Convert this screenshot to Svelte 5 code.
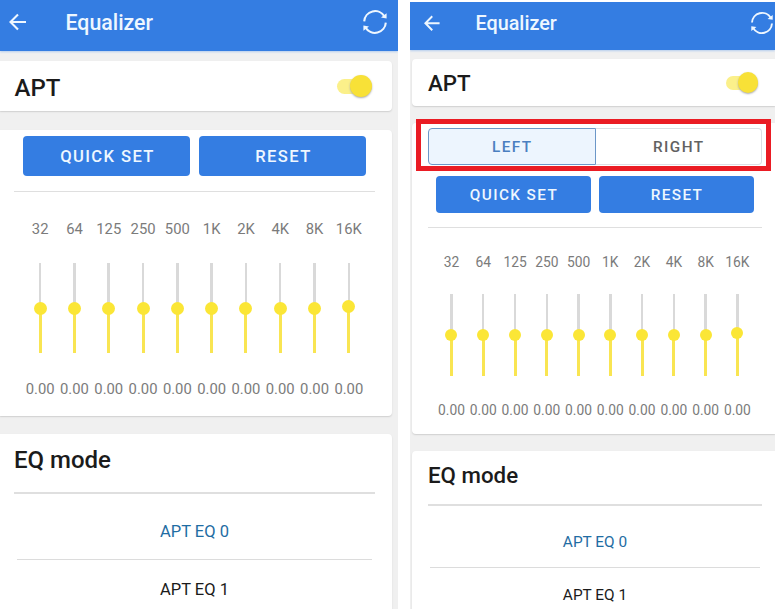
<script>
  const bands = ['32', '64', '125', '250', '500', '1K', '2K', '4K', '8K', '16K'].map((label, i) => ({
    label,
    level: i === 9 ? 52 : 50,
  }));
  const modes = ['APT EQ 0', 'APT EQ 1'];
  const screens = [
    { kind: 'single', channels: false },
    { kind: 'dual', channels: true },
  ];
</script>

<main>
  {#each screens as screen}
    <section class="screen {screen.kind}">
      <header>
        <svg class="back" viewBox="0 0 18 18">
          <path d="M17 9H1.8M9 1.4L1.5 9L9 16.6" />
        </svg>
        <h1>Equalizer</h1>
        <svg class="sync" viewBox="0 0 26 26">
          <path d="M2.2 12.4A10.9 10.9 0 0 1 22.4 7.4M23.8 13.6A10.9 10.9 0 0 1 3.6 18.6" />
          <path class="tip" d="M24.6 4.2V9.4L19 8.6ZM1.4 21.8V16.6L7 17.4Z" />
        </svg>
      </header>
      <div class="card power">
        <h2>APT</h2>
        <div class="switch"><i></i></div>
      </div>
      <div class="card eq">
        {#if screen.channels}
          <div class="channels">
            <button class="on">LEFT</button>
            <button>RIGHT</button>
          </div>
        {/if}
        <div class="actions">
          <button>QUICK SET</button>
          <button>RESET</button>
        </div>
        <hr />
        <div class="bands">
          {#each bands as band}
            <div class="band">
              <span>{band.label}</span>
              <div class="track">
                <div class="fill" style="height: {band.level}%"><i></i></div>
              </div>
              <span>0.00</span>
            </div>
          {/each}
        </div>
      </div>
      <div class="card modes">
        <h2>EQ mode</h2>
        <hr />
        {#each modes as mode, i}
          <div class="mode" class:active={i === 0}>{mode}</div>
        {/each}
      </div>
    </section>
  {/each}
  <div class="highlight"></div>
</main>

<style>
  main {
    position: relative;
    display: flex;
    gap: 12px;
    width: 775px;
    height: 609px;
    overflow: hidden;
    background: #fff;
    font-family: Roboto, 'Liberation Sans', sans-serif;
    color: #1b1b1b;
  }
  .screen {
    box-sizing: border-box;
    flex: none;
    display: flex;
    flex-direction: column;
    height: 609px;
    overflow: hidden;
    background: #f0f0f0;
  }
  .single {
    width: 398px;
    --title: 24px;
    --head: 21.3px;
    --btn: 16.6px;
    --small: 14.8px;
    --mode: 16.5px;
  }
  .dual {
    width: 365px;
    height: 607px;
    margin-top: 2px;
    --title: 22.3px;
    --head: 19.8px;
    --btn: 15.3px;
    --small: 13.8px;
    --mode: 15.4px;
  }
  h1, h2 { margin: 0; font-weight: 500; white-space: nowrap; }
  hr { margin: 0; border: 0; height: 1.5px; background: #dfdfdf; flex: none; }
  button { margin: 0; padding: 0; border: 0; font-family: inherit; font-weight: 500; }
  header {
    box-sizing: border-box;
    flex: none;
    display: flex;
    align-items: center;
    background: #347de2;
    color: #eef7ff;
    box-shadow: 0 1px 2px #b5cdee;
  }
  .single header { height: 51px; padding: 0 10px 7px 9px; }
  .dual header { height: 48px; padding: 0 1px 6px 14px; }
  h1 { flex: 1; font-size: var(--head); }
  svg { fill: none; stroke: #eef7ff; stroke-width: 2.1; flex: none; display: block; }
  .tip { fill: #eef7ff; stroke: none; }
  .single .back { width: 18px; margin-right: 38.5px; }
  .dual .back { width: 16.5px; margin-right: 35px; }
  .single .sync { width: 26px; }
  .dual .sync { width: 24px; }
  .card {
    box-sizing: border-box;
    flex: none;
    display: flex;
    flex-direction: column;
    background: #fff;
    box-shadow: 0 1px 1.5px #cfcfcf;
  }
  .single .card { width: 392px; border-radius: 0 4px 4px 0; }
  .dual .card { margin-left: 2px; width: 363px; border-radius: 4px 0 0 4px; }
  .power { flex-direction: row; align-items: center; justify-content: space-between; }
  .single .power { margin-top: 10px; height: 50px; padding: 3px 20px 0 14.5px; }
  .dual .power { margin-top: 9px; height: 47px; padding: 1px 17px 0 16px; }
  h2 { font-size: var(--title); }
  .switch { display: flex; align-items: center; justify-content: flex-end; background: #fbf08a; border-radius: 8px; }
  .switch i { background: #f8e137; border-radius: 50%; box-shadow: 0 1px 2px #aaa; }
  .single .switch { width: 35px; height: 15px; margin-top: -3px; }
  .single .switch i { width: 22px; height: 22px; }
  .dual .switch { width: 32px; height: 14px; margin-top: -1px; }
  .dual .switch i { width: 20.5px; height: 20.5px; }
  .single .eq { margin-top: 19px; height: 285.5px; padding: 6px 17px 0 14px; }
  .dual .eq { margin-top: 17px; height: 311px; padding: 5px 13px 0 16px; }
  .channels { display: flex; height: 36.5px; margin-bottom: 11.5px; }
  .channels button {
    flex: 1;
    padding: 2px 0 0 1px;
    background: #fff;
    border: 1px solid #dcdfe4;
    border-left: 0;
    border-radius: 0 4px 4px 0;
    color: #626262;
    font-size: 15.3px;
    letter-spacing: 1.4px;
  }
  .channels .on {
    background: #edf5fe;
    border: 1px solid #6c97c8;
    border-radius: 4px 0 0 4px;
    color: #4b7fc0;
  }
  .actions { display: flex; }
  .single .actions { gap: 9px; padding: 0 9px; margin-bottom: 15px; }
  .dual .actions { gap: 8px; padding: 0 8px; margin-bottom: 14px; }
  .actions button {
    flex: 1;
    background: #347de2;
    color: #eef7ff;
    border-radius: 4px;
    font-size: var(--btn);
    letter-spacing: 1.4px;
  }
  .single .actions button { height: 39.5px; padding: 1px 0 0 2px; }
  .dual .actions button { height: 36.5px; padding: 1px 0 0 1px; }
  .bands { display: flex; }
  .single .bands { width: 343px; margin: 28px 0 0 9px; }
  .dual .bands { width: 317.7px; margin: 24.5px 0 0 7.6px; }
  .band { flex: 1 1 0; min-width: 0; display: flex; flex-direction: column; align-items: center; }
  span { font-size: var(--small); line-height: 18px; color: #7b7b7b; white-space: nowrap; }
  .track {
    display: flex;
    flex-direction: column;
    justify-content: flex-end;
    align-items: center;
    width: 2.5px;
    background: #d9d9d9;
  }
  .fill { display: flex; flex-direction: column; align-items: center; width: 3px; background: #f9e552; }
  .fill i { flex: none; border-radius: 50%; background: #fbe636; }
  .single .track { height: 90px; margin: 25px 0 27px; }
  .single .fill i { width: 13px; height: 13px; margin-top: -6.5px; }
  .dual .track { height: 82px; margin: 23px 0 25px; }
  .dual .fill i { width: 12px; height: 12px; margin-top: -6px; }
  .modes { align-items: stretch; }
  .single .modes { margin-top: 18.5px; height: 200px; padding: 11px 17px 0 14px; }
  .dual .modes { margin-top: 17px; height: 180px; padding: 9px 13px 0 16px; }
  .single .modes h2 { height: 47px; line-height: 31px; }
  .dual .modes h2 { height: 44px; line-height: 30px; }
  .mode { box-sizing: border-box; font-size: var(--mode); text-align: center; line-height: 20px; }
  .active { color: #1f6da3; border-bottom: 1px solid #dcdcdc; }
  .single .mode { margin: 0 3px; padding-top: 20px; }
  .single .active { height: 66.5px; padding-top: 28px; }
  .dual .mode { margin: 0 2px; padding-top: 17px; }
  .dual .active { height: 62px; padding-top: 26px; }
  .highlight {
    position: absolute;
    left: 416px;
    top: 119px;
    box-sizing: border-box;
    width: 355px;
    height: 52px;
    border: 5px solid #ea1c24;
  }
</style>
